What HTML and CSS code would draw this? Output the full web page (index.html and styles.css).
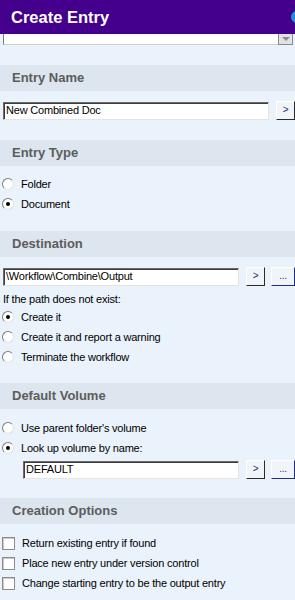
FILE: index.html
```html
<!DOCTYPE html>
<html lang="en">
<head>
  <meta charset="UTF-8" />
  <title>Create Entry</title>
  <link rel="stylesheet" href="styles.css">
</head>
<body>
  <div class="titlebar">
    <div class="title">Create Entry</div>
    <div class="orb"></div>
  </div>

  <div class="combo">
    <div class="combo-field"></div>
    <div class="combo-arrow"><span class="tri"></span></div>
  </div>

  <div class="section">
    <div class="band">Entry Name</div>
    <div class="row-input top10">
      <div class="field wide">New Combined Doc</div>
      <div class="btn">&gt;</div>
    </div>
  </div>

  <div class="section">
    <div class="band">Entry Type</div>
    <div class="options top8">
      <div class="opt"><span class="radio"></span>Folder</div>
      <div class="opt"><span class="radio on"></span>Document</div>
    </div>
  </div>

  <div class="section gap17">
    <div class="band">Destination</div>
    <div class="row-input top10">
      <div class="field">\Workflow\Combine\Output</div>
      <div class="btn">&gt;</div>
      <div class="btn more">...</div>
    </div>
    <div class="note">If the path does not exist:</div>
    <div class="options">
      <div class="opt"><span class="radio on"></span>Create it</div>
      <div class="opt"><span class="radio"></span>Create it and report a warning</div>
      <div class="opt"><span class="radio"></span>Terminate the workflow</div>
    </div>
  </div>

  <div class="section gap16">
    <div class="band">Default Volume</div>
    <div class="options top9">
      <div class="opt"><span class="radio"></span>Use parent folder's volume</div>
      <div class="opt"><span class="radio on"></span>Look up volume by name:</div>
    </div>
    <div class="row-input indent">
      <div class="field">DEFAULT</div>
      <div class="btn">&gt;</div>
      <div class="btn more">...</div>
    </div>
  </div>

  <div class="section gap19">
    <div class="band">Creation Options</div>
    <div class="options top9">
      <div class="opt"><span class="check"></span>Return existing entry if found</div>
      <div class="opt"><span class="check"></span>Place new entry under version control</div>
      <div class="opt"><span class="check"></span>Change starting entry to be the output entry</div>
    </div>
  </div>
</body>
</html>
```

FILE: styles.css
```css
body {
  margin: 0;
  width: 295px;
  height: 600px;
  overflow: hidden;
  background: #eaf2fc;
  font-family: Tahoma, "Liberation Sans", Arial, sans-serif;
  font-size: 11px;
  letter-spacing: -0.2px;
  color: #000;
}

.titlebar {
  height: 34px;
  background: #44008c;
  display: flex;
  align-items: center;
  overflow: hidden;
}

.title {
  padding-left: 11px;
  color: #fff;
  font-size: 16.5px;
  font-weight: bold;
  letter-spacing: 0;
  flex: 1;
}

.orb {
  width: 12px;
  height: 12px;
  border-radius: 50%;
  background: #1e90d8;
  margin-right: -8px;
}

.combo {
  height: 11px;
  display: flex;
  padding-left: 3px;
  padding-right: 2px;
}

.combo-field {
  flex: 1;
  background: #fff;
  border-left: 1px solid #7a7a7a;
  border-bottom: 1px solid #cfcfcf;
}

.combo-arrow {
  width: 13px;
  background: #e2e2e2;
  border: 1px solid #8a8a8a;
  border-top: none;
  display: flex;
  align-items: center;
  justify-content: center;
}

.tri {
  width: 0;
  height: 0;
  border-left: 4px solid transparent;
  border-right: 4px solid transparent;
  border-top: 4px solid #8a8a8a;
}

.section {
  margin-top: 20px;
}

.section.gap17 { margin-top: 17px; }
.section.gap16 { margin-top: 16px; }
.section.gap19 { margin-top: 19px; }

.band {
  height: 26px;
  line-height: 26px;
  background: #dde5ee;
  padding-left: 12px;
  color: #5c5c5c;
  font-size: 13px;
  font-weight: bold;
  letter-spacing: 0;
}

.top10 { margin-top: 10px; }
.top9 { margin-top: 9px; }
.top8 { margin-top: 8px; }

.row-input {
  display: flex;
  align-items: center;
  padding-left: 3px;
  gap: 7px;
}

.row-input.indent {
  padding-left: 23px;
  margin-top: 2px;
}

.field {
  box-sizing: border-box;
  width: 236px;
  height: 18px;
  line-height: 15px;
  padding-left: 2px;
  background: #fff;
  border: 1px solid;
  border-color: #6a6a6a #e4e4e4 #e4e4e4 #6a6a6a;
  box-shadow: inset 1px 1px #3c3c3c;
  white-space: nowrap;
  overflow: hidden;
}

.field.wide {
  width: 266px;
}

.indent .field {
  width: 216px;
}

.btn {
  box-sizing: border-box;
  width: 19px;
  height: 19px;
  line-height: 16px;
  text-align: center;
  font-size: 10px;
  background: #f1f4f9;
  border: 1px solid;
  border-color: #fff #2a2a2a #2a2a2a #fff;
  color: #1b2d6b;
  flex-shrink: 0;
}

.btn.more {
  width: 24px;
  margin-left: -1px;
  border-color: #fff #1c2f8a #1c2f8a #fff;
  color: #1c2f8a;
}

.note {
  margin-top: 5px;
  padding-left: 3px;
  height: 16px;
  line-height: 16px;
}

.options {
  display: flex;
  flex-direction: column;
}

.opt {
  height: 20px;
  display: flex;
  align-items: center;
  padding-left: 2px;
  white-space: nowrap;
}

.radio {
  box-sizing: border-box;
  width: 12px;
  height: 12px;
  border-radius: 50%;
  border: 1px solid;
  border-color: #7c7c7c #e2e2e2 #e2e2e2 #7c7c7c;
  background: #fff;
  margin-right: 7px;
  display: flex;
  align-items: center;
  justify-content: center;
}

.radio.on::after {
  content: "";
  width: 4px;
  height: 4px;
  border-radius: 50%;
  background: #000;
}

.check {
  box-sizing: border-box;
  width: 13px;
  height: 13px;
  border: 1px solid #8c8c8c;
  box-shadow: inset 1px 1px #c8c8c8;
  background: #fff;
  margin-right: 7px;
}
```
